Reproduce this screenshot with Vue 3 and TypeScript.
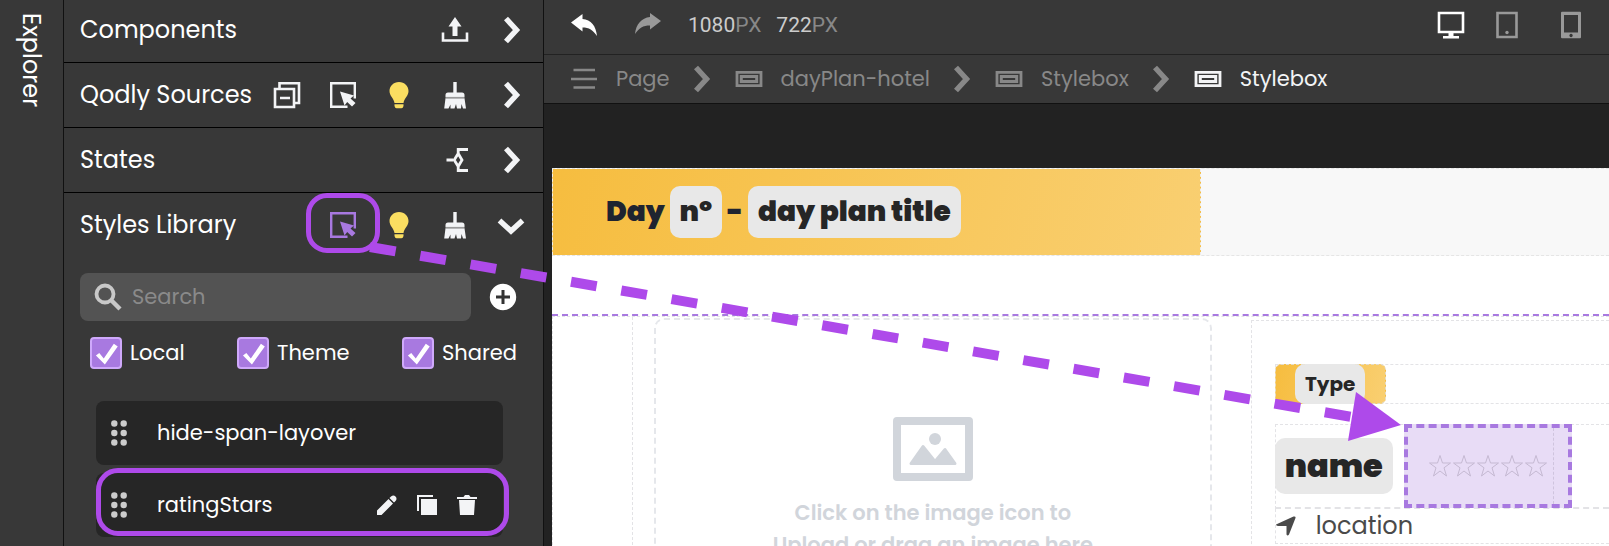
<script setup lang="ts">
import { ref } from 'vue'

interface Panel {
  title: string
  icons: string[]
}
interface Crumb {
  label: string
  icon: string
}

const panels: Panel[] = [
  { title: 'Components', icons: ['upload', 'chevron'] },
  { title: 'Qodly Sources', icons: ['collapse', 'pick', 'bulb', 'broom', 'chevron'] },
  { title: 'States', icons: ['branch', 'chevron'] },
  { title: 'Styles Library', icons: ['pick', 'bulb', 'broom', 'down'] },
]
const crumbs: Crumb[] = [
  { label: 'Page', icon: 'menu' },
  { label: 'dayPlan-hotel', icon: 'stylebox' },
  { label: 'Stylebox', icon: 'stylebox' },
  { label: 'Stylebox', icon: 'stylebox' },
]
const filters = ref([
  { label: 'Local', on: true },
  { label: 'Theme', on: true },
  { label: 'Shared', on: true },
])
const styleItems = ['hide-span-layover', 'ratingStars']
const devices = ['desktop', 'tablet', 'phone']
const selected = 1
const query = ref('')
const isPicking = (panel: Panel, icon: string) => panel.title === 'Styles Library' && icon === 'pick'
</script>

<template>
  <div class="app">
    <svg class="sprite" aria-hidden="true">
      <symbol id="upload" viewBox="0 0 28 28">
        <path d="M14 1 20.500 10.500H16.500V20H11.500V10.500H7.500Z" fill="currentColor" />
        <path d="M2 16.500V24.500H26V16.500" fill="none" stroke="currentColor" stroke-width="2.600" />
      </symbol>
      <symbol id="chevron" viewBox="0 0 28 28">
        <path d="M9 2.500 19.500 14 9 25.500" fill="none" stroke="currentColor" stroke-width="5.400" />
      </symbol>
      <symbol id="down" viewBox="0 0 28 28">
        <path d="M2.500 9.500 14 20 25.500 9.500" fill="none" stroke="currentColor" stroke-width="5.400" />
      </symbol>
      <symbol id="collapse" viewBox="0 0 28 28">
        <path d="M2 8H21V26H2ZM6.500 8V2.200H26V22H21M7 17H17" fill="none" stroke="currentColor" stroke-width="2.600" />
      </symbol>
      <symbol id="pick" viewBox="0 0 28 28">
        <path d="M18.500 25.800H2.200V2.200H25.800V17.500" fill="none" stroke="currentColor" stroke-width="2.400" />
        <path d="M11 10.500 25 14.500 21.500 17.500 26.500 22 23 25.500 18.200 21 15.500 24.500Z" fill="currentColor" />
      </symbol>
      <symbol id="bulb" viewBox="0 0 28 28">
        <path d="M14 1C8.500 1 4.500 5 4.500 10c0 5 4.200 7 5 12H18.500c.8-5 5-7 5-12C23.500 5 19.500 1 14 1ZM9.500 23.200H18.500V25q-.5 2.300-2 2.300H11.500q-1.500 0-2-2.300Z" fill="currentColor" />
      </symbol>
      <symbol id="broom" viewBox="0 0 28 28">
        <path d="M12.300 1H15.700V11.500H21Q23.500 11.500 23.500 14V16H4.500V14Q4.500 11.500 7 11.500H12.300ZM4.500 17.300H23.500L25 27.500H22L20.500 23 20 27.500H16L15 23 13.500 27.500H9.500L9.500 23.500 7.500 27.500H3.200Z" fill="currentColor" />
        <path d="M4.500 16.600H23.500" stroke="#999" stroke-width="1.400" />
      </symbol>
      <symbol id="branch" viewBox="0 0 28 28">
        <path d="M5.500 14H12M17.200 7.500 21 14 17.200 20.500 13.200 14ZM27 3.500H17.200V7.500M17.200 20.500V24.500H27" fill="none" stroke="currentColor" stroke-width="2.800" />
      </symbol>
      <symbol id="search" viewBox="0 0 28 28">
        <circle cx="11" cy="11" r="8.500" fill="none" stroke="currentColor" stroke-width="3.800" />
        <path d="m17 17 9 9" stroke="currentColor" stroke-width="4.400" />
      </symbol>
      <symbol id="plus" viewBox="0 0 28 28">
        <circle cx="14" cy="14" r="13.200" fill="currentColor" />
        <path d="M14 7V21M7 14H21" stroke="#333" stroke-width="3" />
      </symbol>
      <symbol id="grip" viewBox="0 0 16 26">
        <g fill="currentColor">
          <circle cx="3.300" cy="3.500" r="3.200" /><circle cx="12.700" cy="3.500" r="3.200" />
          <circle cx="3.300" cy="13" r="3.200" /><circle cx="12.700" cy="13" r="3.200" />
          <circle cx="3.300" cy="22.500" r="3.200" /><circle cx="12.700" cy="22.500" r="3.200" />
        </g>
      </symbol>
      <symbol id="pencil" viewBox="0 0 20 20">
        <path d="M0 20V15.500L11.500 4 16 8.500 4.500 20ZM12.500 3 14 1.500Q16.500 -.5 18.500 1.500T18.500 6L17 7.500Z" fill="currentColor" />
      </symbol>
      <symbol id="copy" viewBox="0 0 20 20">
        <path d="M4 4H20V20H4ZM0 0H16V2H2V16H0Z" fill="currentColor" />
      </symbol>
      <symbol id="trash" viewBox="0 0 20 20">
        <path d="M0 2H6.500L8 0H12L13.500 2H20V4H0ZM2 5H18L17 20H3Z" fill="currentColor" />
      </symbol>
      <symbol id="undo" viewBox="0 0 28 28">
        <path d="M1 11.500 12.500 3V8C21 8.500 26 15 27 25 23 19 19 16.500 12.500 16.500V20.500Z" fill="currentColor" />
      </symbol>
      <symbol id="redo" viewBox="0 0 28 28">
        <path d="M27 10 16 2V6C7.500 7 2 13 1 23 5 17 9 14.500 16 14.500V18.500Z" fill="currentColor" />
      </symbol>
      <symbol id="menu" viewBox="0 0 28 28">
        <path d="M3.500 5H25M1 14H27M3.500 22.500H25" stroke="currentColor" stroke-width="2.400" />
      </symbol>
      <symbol id="stylebox" viewBox="0 0 28 28">
        <path d="M2 7.400H26V20.600H2Z" fill="none" stroke="currentColor" stroke-width="2.800" />
        <path d="M6.300 11.500H21.700V16.500H6.300Z" fill="none" stroke="currentColor" stroke-width="3" />
      </symbol>
      <symbol id="desktop" viewBox="0 0 28 28">
        <path d="M2 2H26V21H2Z" fill="none" stroke="currentColor" stroke-width="2.600" />
        <path d="M11.500 22H16.500V25H22V27.500H6V25H11.500Z" fill="currentColor" />
      </symbol>
      <symbol id="tablet" viewBox="0 0 28 28">
        <path d="M4.500 2H23.500V26H4.500Z" fill="none" stroke="currentColor" stroke-width="2.600" />
        <circle cx="14" cy="21.500" r="1.700" fill="currentColor" />
      </symbol>
      <symbol id="phone" viewBox="0 0 28 28">
        <path fill-rule="evenodd" d="M5 .8H23Q24 .8 24 2V26Q24 27.300 23 27.300H5Q4 27.300 4 26V2Q4 .8 5 .8ZM7 4V21.500H21V4ZM14 22.800a1.700 1.700 0 1 0 .1 0Z" fill="currentColor" />
      </symbol>
    </svg>

    <aside class="rail"><button class="rail-tab" type="button">Explorer</button></aside>

    <aside class="sidebar">
      <header v-for="panel in panels" :key="panel.title" class="panel-head">
        <h2>{{ panel.title }}</h2>
        <div class="tools">
          <button
            v-for="icon in panel.icons"
            :key="icon"
            type="button"
            class="icon-button"
            :class="[icon, { picking: isPicking(panel, icon) }]"
            :aria-label="icon"
          >
            <svg><use :href="'#' + icon" /></svg>
          </button>
        </div>
      </header>

      <div class="search-row">
        <label class="search">
          <svg><use href="#search" /></svg>
          <input v-model="query" type="text" placeholder="Search" aria-label="Search styles" />
        </label>
        <button type="button" class="icon-button" aria-label="Add style"><svg><use href="#plus" /></svg></button>
      </div>

      <div class="filters">
        <label v-for="filter in filters" :key="filter.label">
          <input v-model="filter.on" type="checkbox" />
          <span>{{ filter.label }}</span>
        </label>
      </div>

      <ul class="styles">
        <li v-for="(item, index) in styleItems" :key="item" :class="{ marked: index === selected }">
          <svg class="grip"><use href="#grip" /></svg>
          <span>{{ item }}</span>
          <div v-if="index === selected" class="item-tools">
            <button v-for="tool in ['pencil', 'copy', 'trash']" :key="tool" type="button" :aria-label="tool">
              <svg><use :href="'#' + tool" /></svg>
            </button>
          </div>
        </li>
      </ul>
    </aside>

    <main class="editor">
      <div class="toolbar">
        <button type="button" class="icon-button" aria-label="Undo"><svg><use href="#undo" /></svg></button>
        <button type="button" class="icon-button dim redo" aria-label="Redo"><svg><use href="#redo" /></svg></button>
        <span class="size">1080<i>PX</i></span>
        <span class="size">722<i>PX</i></span>
        <div class="devices">
          <button
            v-for="device in devices"
            :key="device"
            type="button"
            class="icon-button"
            :class="[device, { dim: device !== 'desktop' }]"
            :aria-label="device"
          >
            <svg><use :href="'#' + device" /></svg>
          </button>
        </div>
      </div>

      <nav class="crumbs" aria-label="Breadcrumb">
        <template v-for="(crumb, index) in crumbs" :key="index">
          <svg v-if="index > 0" class="separator"><use href="#chevron" /></svg>
          <a href="#" :class="{ current: index === crumbs.length - 1 }">
            <svg><use :href="'#' + crumb.icon" /></svg>
            <span>{{ crumb.label }}</span>
          </a>
        </template>
      </nav>

      <div class="stage">
        <div class="canvas">
          <div class="day-strip">
            <h1>Day <span class="chip">nº</span> - <span class="chip">day plan title</span></h1>
          </div>
          <section class="plan">
            <div class="plan-body">
              <div class="media">
                <div class="dropzone">
                  <svg viewBox="0 0 80 64">
                    <path fill-rule="evenodd" d="M4 0H76a4 4 0 0 1 4 4V60a4 4 0 0 1-4 4H4a4 4 0 0 1-4-4V4a4 4 0 0 1 4-4ZM8 8V56H72V8Z" fill="currentColor" />
                    <circle cx="42" cy="22" r="6" fill="currentColor" />
                    <path d="M18 46.500 30 29.500 42 44.500 52 32.500 62 46.500Z" fill="currentColor" stroke="currentColor" stroke-width="3" stroke-linejoin="round" />
                  </svg>
                  <p>Click on the image icon to<br />Upload or drag an image here</p>
                </div>
              </div>
              <div class="details">
                <div class="type-row"><div class="type"><span class="chip">Type</span></div></div>
                <div class="name-row">
                  <span class="chip name">name</span>
                  <div class="rating">
                    <div class="stars">
                      <svg v-for="n in 5" :key="n" viewBox="0 0 24 24">
                        <path d="M12 1.500 14.500 9H22.500L16 13.800 18.500 22 12 17 5.500 22 8 13.800 1.500 9H9.500Z" fill="none" stroke="currentColor" />
                      </svg>
                    </div>
                  </div>
                </div>
                <div class="location">
                  <svg viewBox="0 0 20 20"><path d="M0 8.500 17.500.5Q20 0 19.500 2L13 18.500Q11.500 20.500 10.500 18.500V10H2Q0 9.800 0 8.500Z" fill="currentColor" /></svg>
                  <span>location</span>
                </div>
              </div>
            </div>
          </section>
        </div>
      </div>
    </main>

    <svg class="pointer" aria-hidden="true">
      <line x1="370" y1="247" x2="1352" y2="417" />
      <polygon points="1356,392 1348,441 1401,425" />
    </svg>
  </div>
</template>

<style>
body {
  background: #383838;
}
</style>

<style scoped>
.app,
.app * {
  box-sizing: border-box;
}
.app {
  position: relative;
  display: flex;
  height: 100vh;
  overflow: hidden;
  background: #383838;
  color: #fff;
  font: 21px/32px Poppins, Inter, "Open Sans", sans-serif;
}
.sprite {
  position: absolute;
  width: 0;
  height: 0;
}
h1,
h2,
p,
ul {
  margin: 0;
  padding: 0;
}
button {
  border: 0;
  padding: 0;
  background: none;
  color: inherit;
  font: inherit;
}
.icon-button,
.icon-button svg {
  display: block;
  flex: none;
  width: 28px;
  height: 28px;
}
.rail {
  flex: none;
  width: 64px;
  border-right: 1px solid #111;
}
.rail-tab {
  margin: 13px 15px;
  font-size: 24px;
  writing-mode: vertical-rl;
}
.sidebar {
  flex: none;
  width: 480px;
  border-right: 1px solid #111;
}
.panel-head {
  display: flex;
  align-items: center;
  justify-content: space-between;
  height: 65px;
  padding: 0 18px 0 16px;
  border-bottom: 1px solid #000;
}
.panel-head:first-child {
  height: 63px;
  padding-bottom: 2px;
}
.panel-head:nth-child(4) {
  border-bottom-color: transparent;
}
h2 {
  font-size: 24px;
  font-weight: 400;
}
.tools {
  display: flex;
  gap: 28px;
  color: #f3f4f6;
}
.bulb {
  color: #fade61;
}
.picking {
  position: relative;
  color: #a879e0;
}
.picking::after {
  content: "";
  position: absolute;
  inset: -18px -23px -14px;
  border: 5px solid #ae4aea;
  border-radius: 21px;
}
.search-row {
  display: flex;
  align-items: center;
  gap: 18px;
  padding: 15px 26px 16px 16px;
}
.search {
  display: flex;
  flex: 1;
  align-items: center;
  gap: 10px;
  min-width: 0;
  height: 48px;
  padding: 0 14px;
  border-radius: 8px;
  background: #535353;
}
.search svg {
  flex: none;
  width: 28px;
  height: 28px;
  color: #c8c8c8;
}
.search input {
  flex: 1;
  min-width: 0;
  border: 0;
  padding: 0;
  outline: 0;
  background: none;
  color: #fff;
  font: inherit;
}
.search input::placeholder {
  color: #8a8a8a;
}
.filters {
  display: flex;
  justify-content: space-between;
  padding: 0 26px;
}
.filters label {
  display: flex;
  gap: 8px;
}
.filters input {
  appearance: none;
  width: 32px;
  height: 32px;
  margin: 0;
  border: 2px solid #cfa9fb;
  border-radius: 4px;
  background: #a879e0;
}
.filters input:checked::before {
  content: "";
  display: block;
  width: 28px;
  height: 28px;
  background: #fff;
  clip-path: polygon(14% 59%, 26% 50%, 42% 70%, 78% 17%, 92% 27%, 46% 91%);
}
.styles {
  display: grid;
  gap: 8px;
  padding: 32px 40px 0 32px;
  list-style: none;
}
.styles li {
  position: relative;
  display: flex;
  align-items: center;
  height: 64px;
  padding: 0 26px 0 15px;
  border-radius: 8px;
  background: #262626;
}
.marked::after {
  content: "";
  position: absolute;
  inset: -5px -6px 1px 0;
  border: 5px solid #ae4aea;
  border-radius: 22px;
  pointer-events: none;
}
.grip {
  width: 16px;
  height: 26px;
  margin-right: 30px;
  color: #ccc;
}
.item-tools {
  display: flex;
  gap: 20px;
  margin-left: auto;
  color: #f3f4f6;
}
.item-tools svg {
  display: block;
  width: 20px;
  height: 20px;
}
.editor {
  display: flex;
  flex: 1;
  flex-direction: column;
  min-width: 0;
}
.toolbar {
  display: flex;
  align-items: center;
  height: 55px;
  padding: 0 24px 4px 26px;
  border-bottom: 1px solid #222;
}
.dim {
  color: #999;
}
.redo {
  margin: 0 26px 0 36px;
}
.size {
  margin-right: 15px;
  color: #ccc;
  font: 21px/24px Roboto, sans-serif;
}
.size i {
  color: #888;
  font-style: normal;
}
.devices {
  display: flex;
  margin-left: auto;
}
.tablet {
  margin: 0 36px 0 28px;
}
.crumbs {
  display: flex;
  align-items: center;
  height: 49px;
  padding: 0 26px;
  border-bottom: 1px solid #111;
  color: #888;
}
.crumbs a {
  display: flex;
  align-items: center;
  gap: 18px;
  color: inherit;
  text-decoration: none;
}
.crumbs a.current {
  color: #f3f4f6;
}
.crumbs svg {
  width: 28px;
  height: 28px;
}
.crumbs .separator {
  margin: 0 20px 0 17px;
}
.stage {
  flex: 1;
  padding: 64px 0 0 8px;
  overflow: hidden;
  background: #222;
}
.canvas {
  min-height: 100%;
  background: #fff;
  color: #262626;
}
.day-strip {
  height: 88px;
  border: 1px dashed #e5e5e5;
  border-width: 1px 0;
  background: #f8f8f8;
}
h1 {
  display: flex;
  align-items: center;
  width: 61.4%;
  min-width: max-content;
  height: 100%;
  padding: 0 53px;
  border: 1px dashed #eee;
  border-width: 0 1px;
  background: linear-gradient(105deg, #f6bd3f, #f9cf71);
  color: #1f2430;
  font-size: 28px;
  font-weight: 900;
  white-space: pre;
}
.chip {
  padding: 10px;
  border-radius: 10px;
  background: #e8e8e8;
  color: #262626;
}
.plan {
  margin-top: 58px;
  border-top: 2px dashed #a879e0;
}
.plan-body {
  display: grid;
  grid-template-columns: 618fr 358fr;
  height: 400px;
  padding-left: 79px;
  border: 1px dashed #e3e3e6;
  border-right: 0;
}
.media {
  padding: 1px 39px 0 21px;
  border-left: 1px dashed #e3e3e6;
}
.dropzone {
  display: flex;
  flex-direction: column;
  align-items: center;
  height: 100%;
  padding-top: 97px;
  border: 2px dashed #e5e7eb;
  border-radius: 10px;
  color: #d1d5db;
  font-weight: 600;
  text-align: center;
}
.dropzone svg {
  width: 80px;
  height: 64px;
  margin-bottom: 16px;
}
.details {
  margin-top: 3px;
  padding: 43px 0 0 23px;
  border: 1px dashed #e3e3e6;
  border-right: 0;
}
.type-row {
  height: 40px;
  border: 1px dashed #e3e3e6;
  border-right: 0;
}
.type {
  display: flex;
  justify-content: center;
  width: 111px;
  height: 40px;
  margin: -1px;
  border: 1px dashed #e5dcc8;
  border-radius: 6px;
  background: linear-gradient(105deg, #f6bd3f, #f9cf71);
  font-size: 20px;
  font-weight: 700;
}
.type .chip {
  margin: -1px;
  padding: 4px 10px;
}
.name-row {
  display: flex;
  align-items: center;
  gap: 11px;
  height: 85px;
  margin-top: 20px;
  border: 1px dashed #e3e3e6;
  border-width: 1px 0 2px 1px;
}
.name {
  margin-left: -1px;
  padding: 12px 10px;
  font-size: 32px;
  font-weight: 900;
}
.rating {
  flex: none;
  width: 168px;
  height: 84px;
  padding-right: 14px;
  border: 4px dashed #a879e0;
  background: #e8dcf6;
}
.stars {
  display: flex;
  align-items: center;
  height: 100%;
  padding-left: 20px;
  border-right: 1px dashed #cfc4de;
  color: #c5b9d2;
}
.stars svg {
  flex: none;
  width: 24px;
  height: 24px;
}
.location {
  display: flex;
  align-items: center;
  gap: 20px;
  height: 35px;
  border: 1px dashed #e3e3e6;
  border-width: 0 0 1px 1px;
  color: #4a4a4a;
  font-size: 24px;
}
.location svg {
  width: 20px;
  height: 20px;
}
.pointer {
  position: absolute;
  inset: 0;
  width: 100%;
  height: 100%;
  fill: #ae4aea;
  pointer-events: none;
}
.pointer line {
  stroke: #ae4aea;
  stroke-width: 10px;
  stroke-dasharray: 26 25;
}
</style>
